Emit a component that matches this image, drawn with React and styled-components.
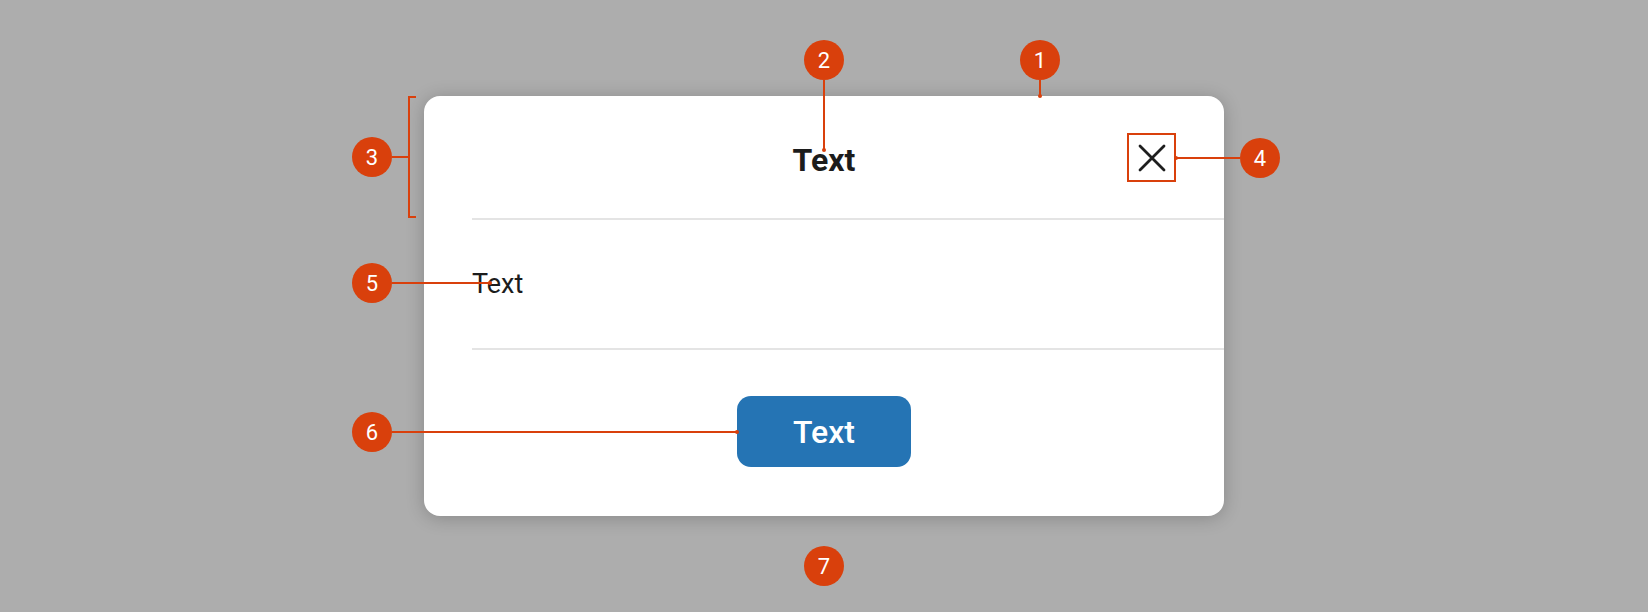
import React from 'react';
import styled, { createGlobalStyle } from 'styled-components';

const ACCENT = '#d9400c';

const GlobalStyle = createGlobalStyle`
  html, body {
    margin: 0;
    padding: 0;
    background: #adadad;
    font-family: Roboto, 'Liberation Sans', sans-serif;
  }
`;

const Page = styled.div`
  width: 100vw;
  height: 100vh;
  display: flex;
  align-items: center;
  justify-content: center;
  background: #adadad;
`;

const Stage = styled.div`
  position: relative;
`;

const Dialog = styled.div`
  width: 800px;
  height: 420px;
  background: #fff;
  border-radius: 16px;
  box-shadow: 0 2px 18px rgba(0, 0, 0, 0.22);
  display: flex;
  flex-direction: column;
`;

const Header = styled.div`
  margin-left: 48px;
  padding: 37px 48px 36px 0;
  display: grid;
  grid-template-columns: 1fr auto 1fr;
  align-items: center;
  border-bottom: 2px solid #e4e4e4;
`;

const Title = styled.h2`
  grid-column: 2;
  margin: 0;
  font-size: 32px;
  line-height: 1;
  font-weight: 700;
  color: #1c1c1c;
  transform: translateY(2px);
`;

const CloseButton = styled.button`
  grid-column: 3;
  justify-self: end;
  width: 49px;
  height: 49px;
  padding: 0;
  display: flex;
  align-items: center;
  justify-content: center;
  background: transparent;
  border: 2px solid ${ACCENT};
  cursor: pointer;
`;

const Body = styled.div`
  margin-left: 48px;
  min-height: 128px;
  display: flex;
  align-items: center;
  border-bottom: 2px solid #e4e4e4;
  font-size: 27px;
  color: #1c1c1c;
`;

const Footer = styled.div`
  flex: 1;
  display: flex;
  align-items: center;
  justify-content: center;
  padding-bottom: 3px;
`;

const PrimaryButton = styled.button`
  width: 174px;
  height: 71px;
  border: none;
  border-radius: 14px;
  background: #2574b4;
  color: #fff;
  font-family: inherit;
  font-size: 32px;
  font-weight: 500;
  cursor: pointer;
`;

/* annotation overlay: each callout is one positioned flex strip */

const Callout = styled.div`
  position: absolute;
  left: ${p => p.$x}px;
  top: ${p => p.$y}px;
  display: flex;
  flex-direction: ${p => p.$dir || 'row'};
  align-items: center;
`;

const Marker = styled.div`
  flex: 0 0 40px;
  width: 40px;
  height: 40px;
  border-radius: 50%;
  background: ${ACCENT};
  color: #fff;
  font-size: 22px;
  display: flex;
  align-items: center;
  justify-content: center;
`;

const Leader = styled.div`
  flex: 0 0 ${p => p.$len}px;
  width: ${p => (p.$vertical ? '2px' : `${p.$len}px`)};
  height: ${p => (p.$vertical ? `${p.$len}px` : '2px')};
  background: ${ACCENT};
`;

const Dot = styled.div`
  flex: 0 0 4px;
  width: 4px;
  height: 4px;
  margin: ${p => p.$margin};
  border-radius: 50%;
  background: ${ACCENT};
`;

const Bracket = styled.div`
  width: 8px;
  height: ${p => p.$len}px;
  border: 2px solid ${ACCENT};
  border-right: none;
  box-sizing: border-box;
`;

const CloseIcon = () => (
  <svg width="28" height="28" viewBox="0 0 28 28" fill="none">
    <path d="M2 2L26 26M26 2L2 26" stroke="#1e1e1e" strokeWidth="2.8" strokeLinecap="round" />
  </svg>
);

const App = () => {
  return (
    <Page>
      <GlobalStyle />
      <Stage>
        <Dialog>
          <Header>
            <Title>Text</Title>
            <CloseButton aria-label="Close">
              <CloseIcon />
            </CloseButton>
          </Header>
          <Body>Text</Body>
          <Footer>
            <PrimaryButton>Text</PrimaryButton>
          </Footer>
        </Dialog>

        <Callout $dir="column" $x={596} $y={-56}>
          <Marker>1</Marker>
          <Leader $vertical $len={16} />
          <Dot $margin="-2px 0 0" />
        </Callout>

        <Callout $dir="column" $x={380} $y={-56}>
          <Marker>2</Marker>
          <Leader $vertical $len={70} />
          <Dot $margin="-2px 0 0" />
        </Callout>

        <Callout $x={-72} $y={0}>
          <Marker>3</Marker>
          <Leader $len={16} />
          <Bracket $len={122} />
        </Callout>

        <Callout $x={750} $y={42}>
          <Dot $margin="0 -2px 0 0" />
          <Leader $len={64} />
          <Marker>4</Marker>
        </Callout>

        <Callout $x={-72} $y={167}>
          <Marker>5</Marker>
          <Leader $len={98} />
          <Dot $margin="0 0 0 -2px" />
        </Callout>

        <Callout $x={-72} $y={316}>
          <Marker>6</Marker>
          <Leader $len={345} />
          <Dot $margin="0 0 0 -2px" />
        </Callout>

        <Callout $x={380} $y={450}>
          <Marker>7</Marker>
        </Callout>
      </Stage>
    </Page>
  );
};

export default App;
